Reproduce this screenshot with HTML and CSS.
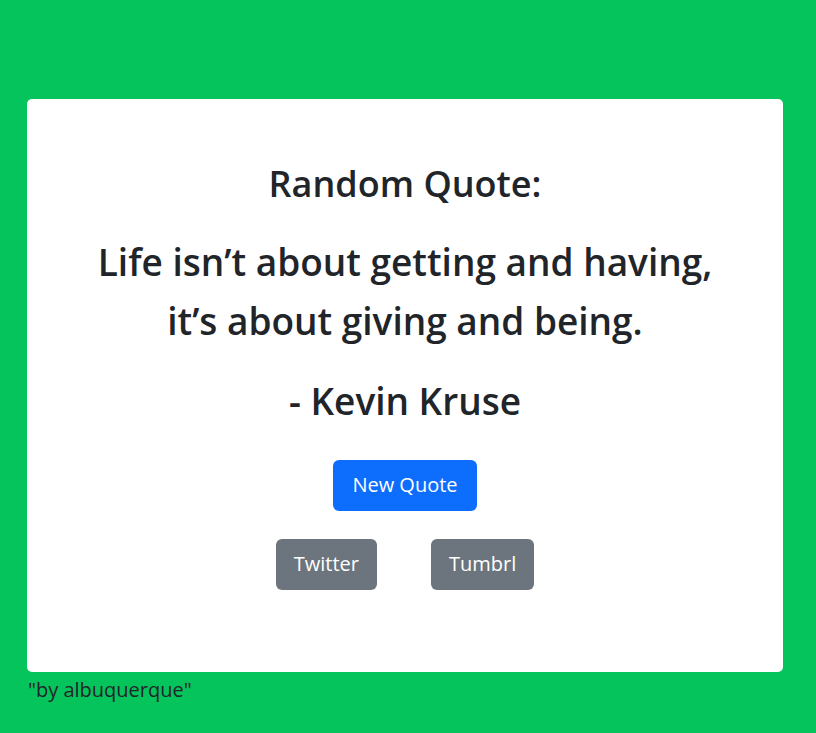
FILE: index.html
```html
<!DOCTYPE html>
<html lang="en">
<head>
<meta charset="utf-8">
<title>Random Quote</title>
<link rel="stylesheet" href="styles.css">
</head>
<body>
<main class="page">
  <section class="card" id="quote-box">
    <h2 class="title">Random Quote:</h2>
    <p class="quote" id="text">Life isn’t about getting and having,<br>it’s about giving and being.</p>
    <p class="author" id="author">- Kevin Kruse</p>
    <button class="btn btn-primary" id="new-quote">New Quote</button>
    <div class="share">
      <a class="btn btn-secondary" id="tweet-quote">Twitter</a>
      <a class="btn btn-secondary" id="tumblr-quote">Tumbrl</a>
    </div>
  </section>
  <footer class="credit">"by albuquerque"</footer>
</main>
</body>
</html>
```
FILE: styles.css
```css
* { box-sizing: border-box; }
html, body { margin: 0; height: 100%; }
body {
  background: #05c45c;
  font-family: "Open Sans", "Noto Sans", sans-serif;
  color: #212529;
}
.page {
  padding: 99px 0 0 27px;
}
.card {
  width: 756px;
  height: 573px;
  background: #fff;
  border-radius: 5px;
  display: flex;
  flex-direction: column;
  align-items: center;
  text-align: center;
  padding-top: 63px;
}
.title {
  margin: 0;
  font-size: 36px;
  font-weight: 600;
  line-height: 1.2;
}
.quote {
  margin: 27px 0 0;
  font-size: 37px;
  font-weight: 600;
  line-height: 59px;
}
.author {
  margin: 29px 0 0;
  font-size: 37px;
  font-weight: 600;
  line-height: 1.2;
}
.btn {
  font-family: inherit;
  font-size: 20px;
  line-height: 30px;
  height: 51px;
  padding: 10px 19px 11px;
  border: 0;
  border-radius: 6px;
  color: #fff;
  cursor: pointer;
  display: inline-block;
  text-decoration: none;
}
.btn-primary { background: #0d6efd; margin-top: 36px; }
.btn-secondary { background: #6c757d; padding-left: 18px; padding-right: 18px; }
.share {
  display: flex;
  gap: 54px;
  margin-top: 28px;
}
.credit {
  font-size: 20px;
  line-height: 30px;
  padding-left: 1px;
  margin-top: 3px;
}
```
